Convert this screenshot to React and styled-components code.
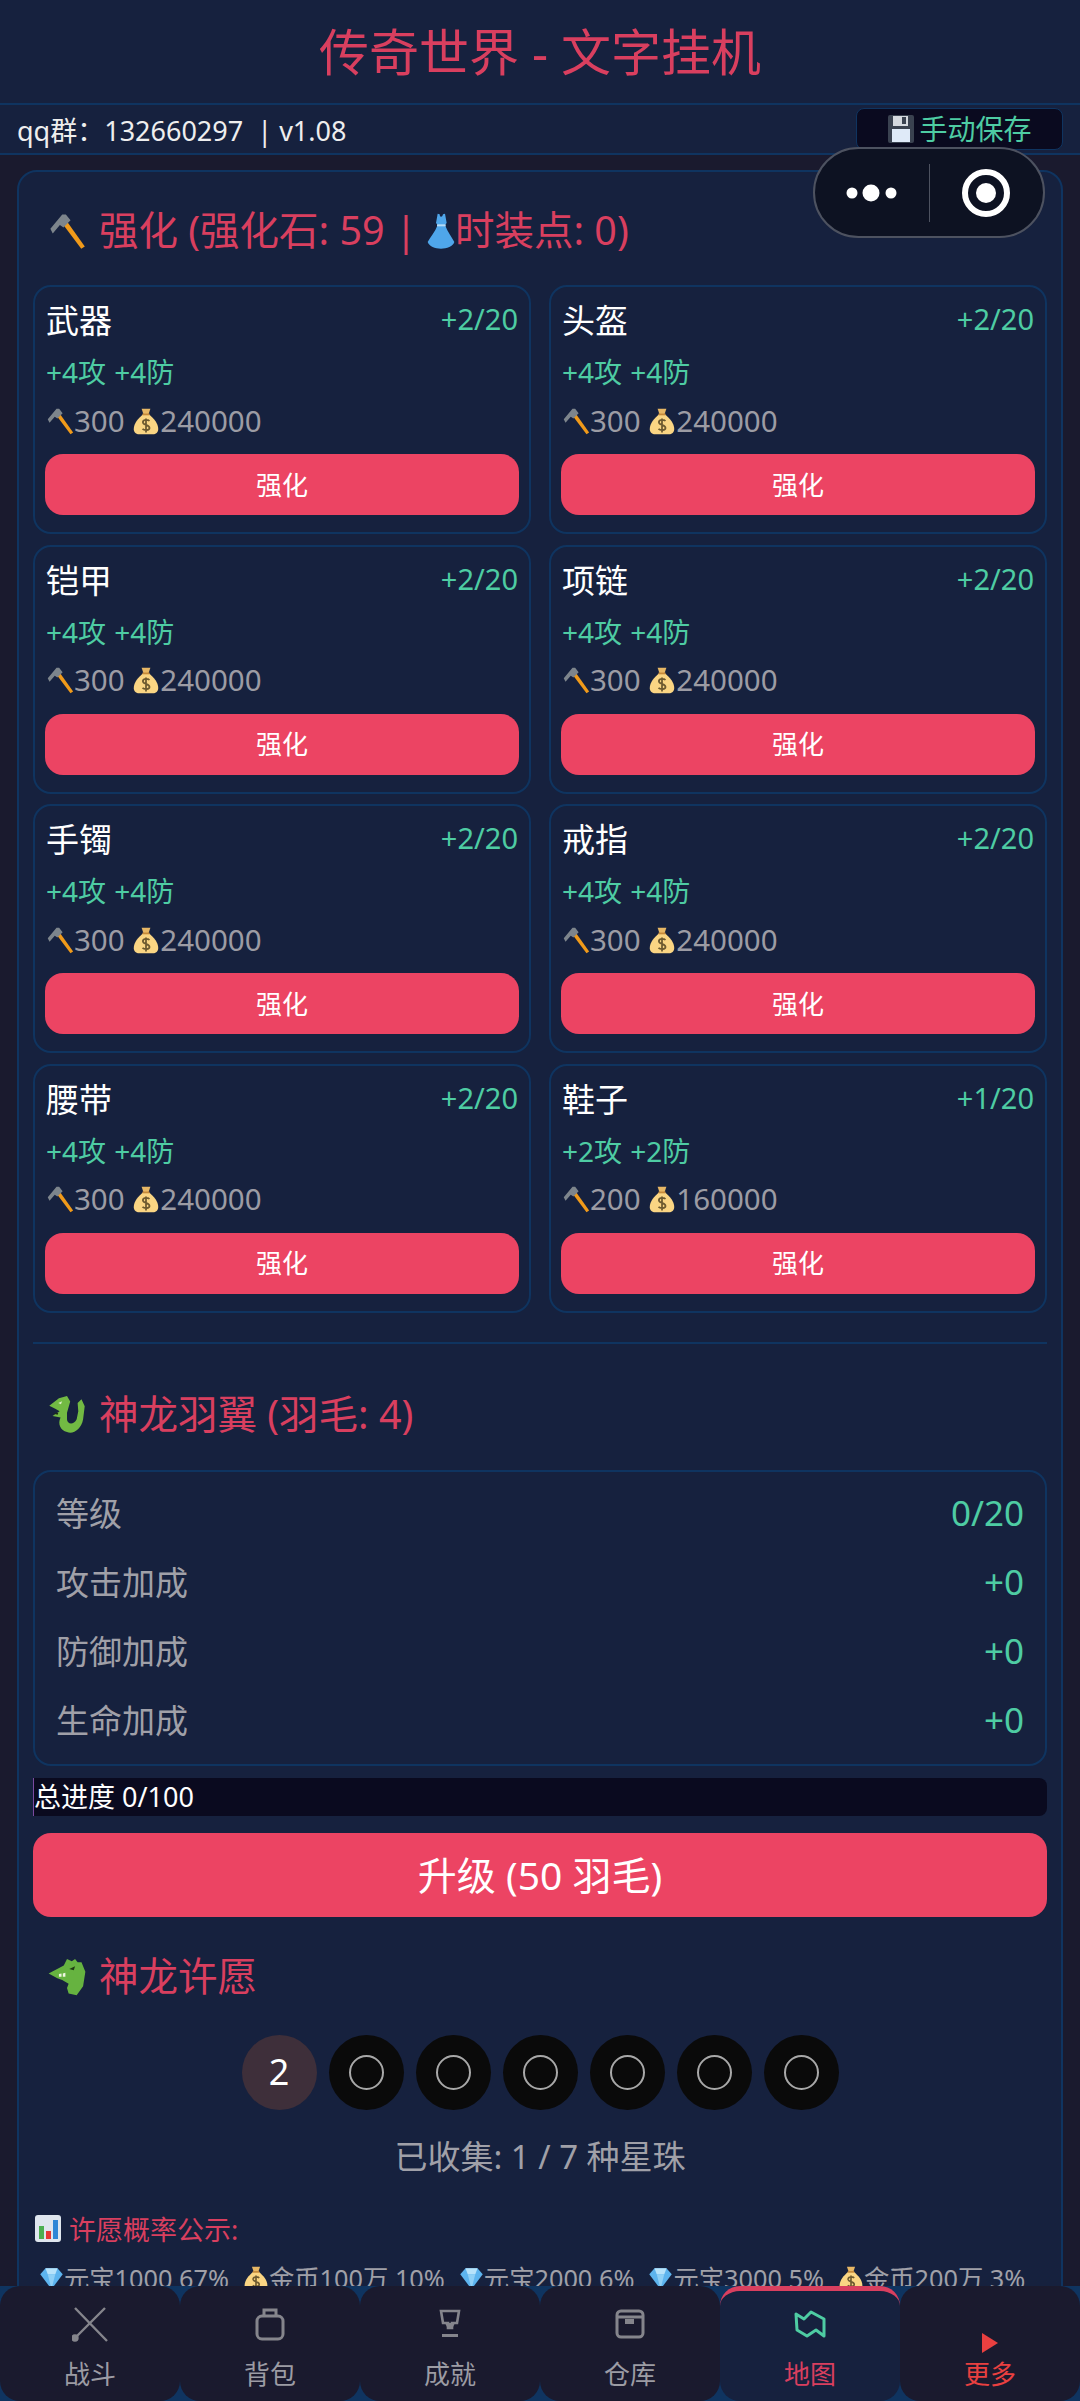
import styled, { createGlobalStyle } from 'styled-components'

const GlobalStyle = createGlobalStyle`
  html, body {
    margin: 0;
    padding: 0;
    background: #1a1a2e;
    font-family: 'Noto Sans', 'Noto Sans CJK SC', sans-serif;
  }
  * {
    box-sizing: border-box;
  }
`

const Page = styled.div`
  position: relative;
  width: 1080px;
  height: 2401px;
  overflow: hidden;
  background: #1a1a2e;
`
const Header = styled.header`
  height: 105px;
  background: #16213e;
  border-bottom: 2px solid #0f3460;
  display: flex;
  align-items: center;
  justify-content: center;
  color: #d93f5f;
  font-size: 50px;
  line-height: 1;
  white-space: pre;
`
const InfoBar = styled.div`
  height: 50px;
  background: #16213e;
  border-bottom: 2px solid #0f3460;
  display: flex;
  align-items: center;
  justify-content: space-between;
  padding: 0 17px;
  color: #eeeeee;
  font-size: 27px;
  white-space: pre;
`
const SaveButton = styled.div`
  width: 207px;
  height: 42px;
  background: #0a0a1f;
  border: 1px solid #0f3460;
  border-radius: 8px;
  display: flex;
  align-items: center;
  justify-content: center;
  gap: 4px;
  color: #4ecca3;
  font-size: 28px;
  line-height: 1;
`
const Panel = styled.main`
  margin: 15px 17px 0;
  padding: 0 14px;
  height: 2400px;
  background: #16213e;
  border: 2px solid #0f3460;
  border-radius: 20px;
`
const SectionTitle = styled.h2`
  margin: 0;
  padding: ${(props) => props.$shift || 0}px 0 0 15px;
  height: ${(props) => props.$height}px;
  display: flex;
  align-items: center;
  gap: 13px;
  color: #d93f5f;
  font-size: 39.5px;
  font-weight: 400;
  line-height: 1;
`
const TitleText = styled.span`
  display: inline-flex;
  align-items: center;
  white-space: pre;
`
const CardGrid = styled.div`
  display: grid;
  grid-template-columns: 498px 498px;
  justify-content: space-between;
  row-gap: 10.5px;
`
const Card = styled.section`
  height: 249px;
  padding: 12px 10px 0;
  border: 2px solid #0f3460;
  border-radius: 18px;
  display: flex;
  flex-direction: column;
`
const CardTop = styled.div`
  height: 46px;
  padding: 0 1px;
  display: flex;
  justify-content: space-between;
  align-items: flex-start;
`
const CardName = styled.span`
  color: #ffffff;
  font-size: 33px;
  line-height: 44px;
`
const CardLevel = styled.span`
  color: #4ecca3;
  font-size: 29px;
  line-height: 40px;
`
const CardStats = styled.div`
  height: 52px;
  padding: 0 1px;
  color: #4ecca3;
  font-size: 28px;
  line-height: 54px;
  word-spacing: 1px;
`
const CardCost = styled.div`
  height: 47px;
  padding: 0 1px;
  display: flex;
  align-items: center;
  color: #9c9ca4;
  font-size: 29.5px;
  line-height: 1;
  white-space: pre;
`
const RedButton = styled.div`
  width: 100%;
  height: ${(props) => props.$height}px;
  margin-top: ${(props) => props.$top || 0}px;
  background: #ec4463;
  border-radius: 18px;
  display: flex;
  align-items: center;
  justify-content: center;
  color: #ffffff;
  font-size: ${(props) => props.$size}px;
  line-height: 1;
`
const Divider = styled.div`
  margin-top: 29px;
  height: 2px;
  background: #0f3460;
`
const StatBox = styled.section`
  height: 296px;
  padding: 6px 21px;
  border: 2px solid #0f3460;
  border-radius: 18px;
`
const StatRow = styled.div`
  height: 69px;
  display: flex;
  align-items: center;
  justify-content: space-between;
  color: #a0a0a8;
  font-size: 33px;
`
const StatValue = styled.span`
  color: #4ecca3;
  font-size: 35px;
`
const ProgressTrack = styled.div`
  margin-top: 12px;
  height: 38px;
  background: #0a0a1f;
  border-left: 1px solid #7a4aa0;
  border-radius: 0 8px 8px 0;
  color: #ffffff;
  font-size: 27px;
  line-height: 38px;
`
const OrbRow = styled.div`
  display: flex;
  justify-content: center;
  gap: 12px;
`
const Orb = styled.div`
  width: 75px;
  height: 75px;
  border-radius: 50%;
  background: ${(props) => (props.$lit ? '#3e2f3a' : '#0a0a0a')};
  display: flex;
  align-items: center;
  justify-content: center;
  color: #ffffff;
  font-size: 36px;
  line-height: 1;
`
const OrbRing = styled.div`
  width: 35px;
  height: 35px;
  border: 2px solid #a8a8a8;
  border-radius: 50%;
`
const Collected = styled.div`
  margin-top: 24px;
  height: 46px;
  text-align: center;
  color: #a0a0a8;
  font-size: 33px;
  line-height: 46px;
`
const OddsTitle = styled.div`
  margin-top: 32px;
  padding-left: 2px;
  height: 34px;
  display: flex;
  align-items: center;
  gap: 8px;
  color: #d93f5f;
  font-size: 27px;
`
const OddsList = styled.div`
  margin-top: 14px;
  padding-left: 6px;
  display: flex;
  gap: 14px;
  align-items: center;
  color: #a0a0a8;
  font-size: 25.3px;
  line-height: 36px;
  white-space: nowrap;
`
const OddsItem = styled.span`
  display: inline-flex;
  align-items: center;
`
const Capsule = styled.div`
  position: absolute;
  left: 813px;
  top: 147px;
  width: 232px;
  height: 91px;
  background: #0d1222;
  border: 2px solid #4d5260;
  border-radius: 46px;
  display: flex;
  align-items: center;
`
const CapsuleHalf = styled.div`
  flex: 1;
  display: flex;
  align-items: center;
  justify-content: center;
`
const CapsuleLine = styled.div`
  width: 1px;
  height: 58px;
  background: #4d5260;
`
const Nav = styled.nav`
  position: absolute;
  left: 0;
  right: 0;
  bottom: 0;
  height: 115px;
  background: #0f3460;
  display: grid;
  grid-template-columns: repeat(6, 1fr);
`
const NavItem = styled.div`
  background: ${(props) => (props.$active ? '#16213e' : '#1a1a2e')};
  border-top: ${(props) => (props.$active ? '5px solid #d93f5f' : '0')};
  border-radius: 20px;
  padding-top: ${(props) => (props.$active ? '15px' : '20px')};
  display: flex;
  flex-direction: column;
  align-items: center;
  color: ${(props) => props.$color};
  font-size: 26px;
  line-height: 1;
`
const NavIcon = styled.div`
  height: 36px;
  margin-bottom: 19px;
  display: flex;
  align-items: ${(props) => (props.$low ? 'flex-start' : 'center')};
  justify-content: center;
`

const Hammer = ({ size = 28 }) => (
  <svg width={size} height={size} viewBox="0 0 32 32">
    <path d="M13 11 L16 8 L31 29 L28 31 Z" fill="#f09a1a" />
    <path d="M2 14 L12 2 L15 2 L19 7 L13 13 L10 11 L4 18 Z" fill="#7d858c" />
  </svg>
)
const MoneyBag = ({ size = 28 }) => (
  <svg width={size} height={size} viewBox="0 0 32 32">
    <path d="M11 2 L21 2 L19 8 L13 8 Z" fill="#e7b765" />
    <path d="M13 8 H19 C25 13 30 19 30 25 C30 29 27 31 24 31 H8 C5 31 2 29 2 25 C2 19 7 13 13 8 Z" fill="#fad583" />
    <rect x="12" y="7.5" width="8" height="2" fill="#c68a3a" />
    <path d="M20 16 C18 14 12 14 12.5 18 C13 21 20 20 20 24 C20 27 14 27 12 25 M16 13 V29" fill="none" stroke="#6d5a30" strokeWidth="2" />
  </svg>
)
const Dress = () => (
  <svg width="28" height="36" viewBox="56 38 84 108">
    <path d="M88 40 L94 42 C94 52 102 52 104 42 L110 40 L115 68 L110 74 C118 95 130 110 138 125 C135 138 115 145 98 145 C80 145 62 138 58 125 C66 110 80 95 88 74 L83 68 Z" fill="#4fa6ea" />
    <rect x="86" y="72" width="26" height="6" fill="#b6dcf7" />
  </svg>
)
const Floppy = () => (
  <svg width="28" height="30" viewBox="0 0 28 30">
    <rect x="1" y="1" width="26" height="28" rx="2" fill="#3a4250" />
    <rect x="6" y="2" width="15" height="10" fill="#d5d9df" />
    <rect x="15" y="3" width="4" height="7" fill="#3a4250" />
    <rect x="5" y="15" width="18" height="13" fill="#dfeaf8" />
  </svg>
)
const Serpent = () => (
  <svg width="38" height="40" viewBox="26 35 118 124">
    <path
      d="M30 68 L60 45 L85 38 L95 55 L85 90 L85 110 C85 125 105 130 115 110 L120 85 L118 60 L130 48 L140 70 L135 110 C130 140 105 158 85 150 C65 145 55 125 65 105 L40 100 L62 85 L50 78 Z"
      fill="#72ba43"
    />
    <path d="M58 60 L70 54 L66 64 Z" fill="#dff0c8" />
    <path d="M42 92 L58 90 L56 96 Z" fill="#1c2a14" />
  </svg>
)
const DragonFace = () => (
  <svg width="38" height="38" viewBox="26 32 118 118">
    <path
      d="M28 80 L75 55 L85 35 L100 42 L110 35 L118 45 L130 45 L142 75 L135 120 L115 148 L90 142 L85 125 L90 112 L70 100 L55 95 Z"
      fill="#66b340"
    />
    <path d="M60 82 L68 80 L68 90 L60 90 Z M72 80 L80 78 L80 90 L72 90 Z" fill="#eef6e0" />
    <path d="M92 66 L110 58 L106 70 Z" fill="#1f3a14" />
  </svg>
)
const Chart = () => (
  <svg width="26" height="27" viewBox="0 0 26 27">
    <rect x="0" y="0" width="26" height="27" rx="3" fill="#dfe6ee" />
    <rect x="4" y="11" width="5" height="13" fill="#4caf50" />
    <rect x="11" y="16" width="5" height="8" fill="#e53935" />
    <rect x="18" y="5" width="5" height="19" fill="#2f86d6" />
  </svg>
)
const Gem = () => (
  <svg width="25" height="24" viewBox="0 0 32 32">
    <path d="M8 3 H24 L31 11 L16 31 L1 11 Z" fill="#5db4ee" />
    <path d="M8 3 H24 L21 11 H11 Z" fill="#b7e3fb" />
    <path d="M11 11 H21 L16 31 Z" fill="#8fd0f6" />
  </svg>
)

const SwordsIcon = () => (
  <svg width="36" height="36" viewBox="0 0 36 36" fill="none" stroke="#85858c" strokeWidth="2.4">
    <path d="M3 2 L35 35 M33 2 L3 32" />
    <circle cx="3" cy="32" r="2.5" fill="#85858c" />
  </svg>
)
const BagIcon = () => (
  <svg width="30" height="34" viewBox="0 0 30 34" fill="none" stroke="#85858c" strokeWidth="3">
    <rect x="2" y="9" width="26" height="23" rx="5" />
    <path d="M9 9 V3 H21 V9" />
  </svg>
)
const CupIcon = () => (
  <svg width="22" height="30" viewBox="0 0 22 30">
    <path d="M2 2 H20 L18 14 H13 V19 H9 V14 H4 Z" fill="none" stroke="#85858c" strokeWidth="2.6" />
    <path d="M6 14 H16 L13 20 H9 Z" fill="#85858c" />
    <rect x="3" y="25" width="16" height="3" fill="#85858c" />
  </svg>
)
const BoxIcon = () => (
  <svg width="30" height="30" viewBox="0 0 30 30" fill="none" stroke="#85858c" strokeWidth="3">
    <rect x="2" y="2" width="26" height="26" rx="4" />
    <path d="M2 8 H28" />
    <rect x="10" y="10" width="9" height="5" fill="#85858c" stroke="none" />
  </svg>
)
const MapIcon = () => (
  <svg width="32" height="28" viewBox="0 0 32 28" fill="none" stroke="#4ecca3" strokeWidth="3" strokeLinejoin="round">
    <path d="M2 4 L10 9 L17 2 L30 9 V26 L22 20 L13 26 L3 20 Z" />
  </svg>
)
const PlayIcon = () => (
  <svg width="18" height="47" viewBox="0 0 18 47">
    <path d="M1 27 L17 37 L1 47 Z" fill="#e94040" />
  </svg>
)

const equipment = [
  { name: '武器', level: '+2/20', stats: '+4攻 +4防', stone: 300, gold: 240000 },
  { name: '头盔', level: '+2/20', stats: '+4攻 +4防', stone: 300, gold: 240000 },
  { name: '铠甲', level: '+2/20', stats: '+4攻 +4防', stone: 300, gold: 240000 },
  { name: '项链', level: '+2/20', stats: '+4攻 +4防', stone: 300, gold: 240000 },
  { name: '手镯', level: '+2/20', stats: '+4攻 +4防', stone: 300, gold: 240000 },
  { name: '戒指', level: '+2/20', stats: '+4攻 +4防', stone: 300, gold: 240000 },
  { name: '腰带', level: '+2/20', stats: '+4攻 +4防', stone: 300, gold: 240000 },
  { name: '鞋子', level: '+1/20', stats: '+2攻 +2防', stone: 200, gold: 160000 },
]

const wingStats = [
  { label: '等级', value: '0/20' },
  { label: '攻击加成', value: '+0' },
  { label: '防御加成', value: '+0' },
  { label: '生命加成', value: '+0' },
]

const odds = [
  { icon: <Gem />, text: '元宝1000 67%' },
  { icon: <MoneyBag size={26} />, text: '金币100万 10%' },
  { icon: <Gem />, text: '元宝2000 6%' },
  { icon: <Gem />, text: '元宝3000 5%' },
  { icon: <MoneyBag size={26} />, text: '金币200万 3%' },
]

const tabs = [
  { label: '战斗', icon: <SwordsIcon />, color: '#9c9ca4' },
  { label: '背包', icon: <BagIcon />, color: '#9c9ca4' },
  { label: '成就', icon: <CupIcon />, color: '#9c9ca4' },
  { label: '仓库', icon: <BoxIcon />, color: '#9c9ca4' },
  { label: '地图', icon: <MapIcon />, color: '#d93f5f', active: true },
  { label: '更多', icon: <PlayIcon />, color: '#e94040', low: true },
]

const App = () => (
  <Page>
    <GlobalStyle />
    <Header>传奇世界 - 文字挂机</Header>
    <InfoBar>
      <span>qq群：132660297  | v1.08</span>
      <SaveButton>
        <Floppy />
        手动保存
      </SaveButton>
    </InfoBar>
    <Panel>
      <SectionTitle $height={113} $shift={4}>
        <Hammer size={38} />
        <TitleText>
          {'强化 (强化石: 59 | '}
          <Dress />
          {'时装点: 0)'}
        </TitleText>
      </SectionTitle>
      <CardGrid>
        {equipment.map((item) => (
          <Card key={item.name}>
            <CardTop>
              <CardName>{item.name}</CardName>
              <CardLevel>{item.level}</CardLevel>
            </CardTop>
            <CardStats>{item.stats}</CardStats>
            <CardCost>
              <Hammer />
              {item.stone + ' '}
              <MoneyBag />
              {item.gold}
            </CardCost>
            <RedButton $height={61} $top={10} $size={26}>
              强化
            </RedButton>
          </Card>
        ))}
      </CardGrid>
      <Divider />
      <SectionTitle $height={126} $shift={16}>
        <Serpent />
        <TitleText>神龙羽翼 (羽毛: 4)</TitleText>
      </SectionTitle>
      <StatBox>
        {wingStats.map((row) => (
          <StatRow key={row.label}>
            <span>{row.label}</span>
            <StatValue>{row.value}</StatValue>
          </StatRow>
        ))}
      </StatBox>
      <ProgressTrack>总进度 0/100</ProgressTrack>
      <RedButton $height={84} $top={17} $size={39}>
        升级 (50 羽毛)
      </RedButton>
      <SectionTitle $height={118} $shift={2}>
        <DragonFace />
        <TitleText>神龙许愿</TitleText>
      </SectionTitle>
      <OrbRow>
        <Orb $lit>2</Orb>
        {[1, 2, 3, 4, 5, 6].map((n) => (
          <Orb key={n}>
            <OrbRing />
          </Orb>
        ))}
      </OrbRow>
      <Collected>已收集: 1 / 7 种星珠</Collected>
      <OddsTitle>
        <Chart />
        许愿概率公示:
      </OddsTitle>
      <OddsList>
        {odds.map((entry) => (
          <OddsItem key={entry.text}>
            {entry.icon}
            {entry.text}
          </OddsItem>
        ))}
      </OddsList>
    </Panel>
    <Capsule>
      <CapsuleHalf>
        <svg width="52" height="20" viewBox="0 0 52 20" fill="#ffffff">
          <circle cx="6" cy="10" r="5.5" />
          <circle cx="25" cy="10" r="8.5" />
          <circle cx="45" cy="10" r="5.5" />
        </svg>
      </CapsuleHalf>
      <CapsuleLine />
      <CapsuleHalf>
        <svg width="50" height="50" viewBox="0 0 50 50">
          <circle cx="25" cy="25" r="21" fill="none" stroke="#ffffff" strokeWidth="6" />
          <circle cx="25" cy="25" r="10" fill="#ffffff" />
        </svg>
      </CapsuleHalf>
    </Capsule>
    <Nav>
      {tabs.map((tab) => (
        <NavItem key={tab.label} $active={tab.active} $color={tab.color}>
          <NavIcon $low={tab.low}>{tab.icon}</NavIcon>
          {tab.label}
        </NavItem>
      ))}
    </Nav>
  </Page>
)

export default App
